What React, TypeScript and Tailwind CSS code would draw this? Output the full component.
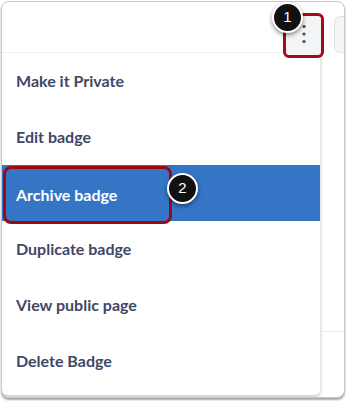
const ITEMS = ['Make it Private', 'Edit badge', 'Archive badge', 'Duplicate badge', 'View public page', 'Delete Badge'];

function Step({ n }: { n: number }) {
  return (
    <div className="w-[31px] h-[31px] rounded-full bg-[#111] border-2 border-white shadow-[0_2px_4px_rgba(0,0,0,0.45)] flex items-center justify-center text-white text-[15px] font-[Arial,'Liberation_Sans',sans-serif]">
      {n}
    </div>
  );
}

export default function App() {
  return (
    <div className="w-[346px] h-[401px] bg-white font-[Lato,'Open_Sans',sans-serif]">
      <div className="relative ml-px mt-px w-[344px] h-[397px] rounded-lg border border-[#c8c8c8] shadow-[0_2px_2px_rgba(0,0,0,0.35)] overflow-hidden bg-white">
        {/* cabecera */}
        <div className="h-[51px] flex items-start">
          <div className="w-[281px] h-[51px] shrink-0 border-b border-[#f0f0f0]" />
          <div className="relative shrink-0 mt-[11px] w-[41px] h-[45px] rounded-md border-[3px] border-[#a00d14] bg-[#f3f4f5] flex items-center justify-center z-10">
            <svg width="6" height="20" viewBox="0 0 6 20" className="-mt-[3px]">
              <circle cx="3" cy="2.5" r="1.6" fill="#3d4a57" />
              <circle cx="3" cy="10" r="1.6" fill="#3d4a57" />
              <circle cx="3" cy="17.5" r="1.6" fill="#3d4a57" />
            </svg>
            <div className="absolute -left-[14px] -top-[14px]"><Step n={1} /></div>
          </div>
          <div className="shrink-0 ml-[10px] mt-[14px] w-[20px] h-[37px] rounded-l-md border border-[#e2e2e2] bg-[#f5f5f5]" />
        </div>

        {/* menú */}
        <div className="w-[319px] h-[342px] rounded-b-md border-r border-[#e6e6e6] shadow-[0_2px_3px_rgba(0,0,0,0.2)] flex flex-col">
          {ITEMS.map(t => (
            t === 'Archive badge' ? (
              <div key={t} className="relative h-14 bg-[#3575c5] flex items-center">
                <div className="ml-px mt-[3px] h-[58px] w-[169px] rounded-lg border-[3px] border-[#9b0a12] flex items-center pl-[10px] text-white text-[16px] font-bold">
                  {t}
                </div>
                <div className="absolute left-[165px] top-[8px]"><Step n={2} /></div>
              </div>
            ) : (
              <div key={t} className="h-14 flex items-center pl-[14px] text-[16px] font-bold text-[#3f4766]">{t}</div>
            )
          ))}
        </div>
        <div className="absolute left-[320px] top-[329px] w-[24px] border-t border-[#ededed]" />
      </div>
    </div>
  );
}
